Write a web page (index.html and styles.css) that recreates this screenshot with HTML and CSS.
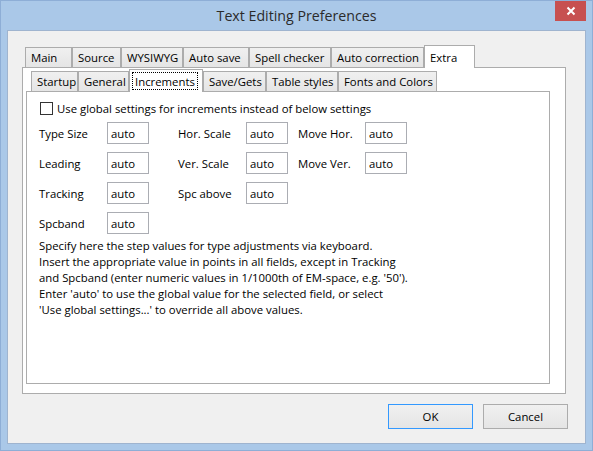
FILE: index.html
```html
<!DOCTYPE html>
<html>
<head>
<meta charset="utf-8">
<title>Text Editing Preferences</title>
<link rel="stylesheet" href="styles.css">
</head>
<body>
<div class="window">
  <div class="titlebar">
    <div class="title">Text Editing Preferences</div>
    <div class="close">
      <svg width="10" height="10" viewBox="0 0 10 10"><path d="M1.5 1.5 L8.5 8.5 M8.5 1.5 L1.5 8.5" stroke="#fff" stroke-width="2" fill="none"/></svg>
    </div>
  </div>
  <div class="client">
    <div class="tabstrip outer-strip">
      <div class="tab w-main">Main</div>
      <div class="tab w-source">Source</div>
      <div class="tab w-wysiwyg">WYSIWYG</div>
      <div class="tab w-autosave">Auto save</div>
      <div class="tab w-spell">Spell checker</div>
      <div class="tab w-autocorr">Auto correction</div>
      <div class="tab sel w-extra">Extra</div>
    </div>
    <div class="panel outer-panel">
      <div class="tabstrip inner-strip">
        <div class="tab w-startup">Startup</div>
        <div class="tab w-general">General</div>
        <div class="tab sel w-incr"><span class="focus">Increments</span></div>
        <div class="tab w-save">Save/Gets</div>
        <div class="tab w-table">Table styles</div>
        <div class="tab w-fonts">Fonts and Colors</div>
      </div>
      <div class="panel inner-panel">
        <div class="check-row"><span class="checkbox"></span><span class="check-label">Use global settings for increments instead of below settings</span></div>
        <div class="fields">
          <span class="lbl">Type Size</span><span class="cell"><input class="field" type="text" value="auto"></span>
          <span class="lbl">Hor. Scale</span><span class="cell"><input class="field" type="text" value="auto"></span>
          <span class="lbl">Move Hor.</span><span class="cell"><input class="field" type="text" value="auto"></span>

          <span class="lbl">Leading</span><span class="cell"><input class="field" type="text" value="auto"></span>
          <span class="lbl">Ver. Scale</span><span class="cell"><input class="field" type="text" value="auto"></span>
          <span class="lbl">Move Ver.</span><span class="cell"><input class="field" type="text" value="auto"></span>

          <span class="lbl">Tracking</span><span class="cell"><input class="field" type="text" value="auto"></span>
          <span class="lbl">Spc above</span><span class="cell"><input class="field" type="text" value="auto"></span>
          <span class="lbl"></span><span class="cell"></span>

          <span class="lbl">Spcband</span><span class="cell"><input class="field" type="text" value="auto"></span>
        </div>
        <p class="desc">Specify here the step values for type adjustments via keyboard.<br>Insert the appropriate value in points in all fields, except in Tracking<br>and Spcband (enter numeric values in 1/1000th of EM-space, e.g. '50').<br>Enter 'auto' to use the global value for the selected field, or select<br>'Use global settings...' to override all above values.</p>
      </div>
    </div>
    <div class="buttons">
      <button class="btn default">OK</button>
      <button class="btn">Cancel</button>
    </div>
  </div>
</div>
</body>
</html>
```

FILE: styles.css
```css
* { box-sizing: border-box; }
html, body { margin: 0; padding: 0; background: #fff; }
body {
  font-family: "Open Sans", "Noto Sans", sans-serif;
  font-size: 11.35px;
  color: #000;
}
.window {
  width: 593px;
  height: 451px;
  background: #aac8e8;
  border: 1px solid #8eaed6;
  padding: 0 6px 6px;
  display: flex;
  flex-direction: column;
}
.titlebar {
  height: 29px;
  display: grid;
  flex: none;
}
.title, .close { grid-area: 1 / 1; }
.title {
  text-align: center;
  line-height: 30px;
  font-size: 14.2px;
  color: #2b2b2b;
}
.close {
  justify-self: end;
  align-self: start;
  width: 31px;
  height: 20px;
  background: #c75050;
  display: flex;
  align-items: center;
  justify-content: center;
}
.client {
  flex: 1;
  background: #f0f0f0;
  border: 1px solid #9fb4cf;
  display: flex;
  flex-direction: column;
  padding: 14px 19px 14px 14px;
}
.tabstrip {
  display: flex;
  align-items: flex-end;
  height: 22px;
  flex: none;
}
.outer-strip { padding-left: 3px; }
.inner-strip { padding-left: 5px; }
.tab {
  height: 20px;
  border: 1px solid #acacac;
  border-bottom: none;
  background: linear-gradient(#f0f0f0, #e5e5e5);
  display: flex;
  align-items: center;
  padding-left: 5px;
  white-space: nowrap;
}
.tab.sel {
  height: 23px;
  margin-bottom: -1px;
  background: #fff;
  position: relative;
  z-index: 1;
}
.focus {
  border: 1px dotted #000;
  height: 18px;
  display: flex;
  align-items: center;
  margin-left: -3px;
  padding: 0 2px;
}
.w-main { width: 47px; }
.w-source { width: 49px; }
.w-wysiwyg { width: 62px; }
.w-autosave { width: 66px; }
.w-spell { width: 82px; }
.w-autocorr { width: 93px; }
.w-extra { width: 51px; }
.w-startup { width: 47px; }
.w-general { width: 51px; }
.w-incr { width: 74px; }
.w-save { width: 63px; }
.w-table { width: 72px; }
.w-fonts { width: 99px; }
.panel {
  background: #fff;
  border: 1px solid #acacac;
}
.outer-panel {
  flex: 1;
  display: flex;
  flex-direction: column;
  padding: 1px 15px 9px 3px;
}
.inner-panel {
  flex: 1;
  padding: 10px 12px;
}
.check-row {
  display: flex;
  align-items: center;
  height: 13px;
}
.checkbox {
  width: 13px;
  height: 13px;
  border: 1px solid #333;
  background: #fff;
  margin-left: 1px;
  margin-right: 4px;
  flex: none;
}
.fields {
  display: grid;
  grid-template-columns: 68px 71px 68px 52px 67px 42px;
  grid-auto-rows: 22px;
  row-gap: 8px;
  margin-top: 7px;
}
.lbl { align-self: center; white-space: nowrap; }
.field {
  width: 42px;
  height: 22px;
  border: 1px solid #abadb3;
  padding: 0 3px;
  margin: 0;
  font: inherit;
  color: #000;
  background: #fff;
  outline: none;
  display: block;
}
.desc {
  margin: 4px 0 0;
  line-height: 16px;
  white-space: nowrap;
}
.buttons {
  display: flex;
  justify-content: flex-end;
  gap: 10px;
  margin-top: 10px;
  margin-right: -2px;
  flex: none;
}
.btn {
  width: 85px;
  height: 25px;
  border: 1px solid #acacac;
  background: linear-gradient(#f0f0f0, #e5e5e5);
  font: inherit;
  color: #000;
  padding: 0;
  margin: 0;
}
.btn.default { border-color: #3399ff; }
```
